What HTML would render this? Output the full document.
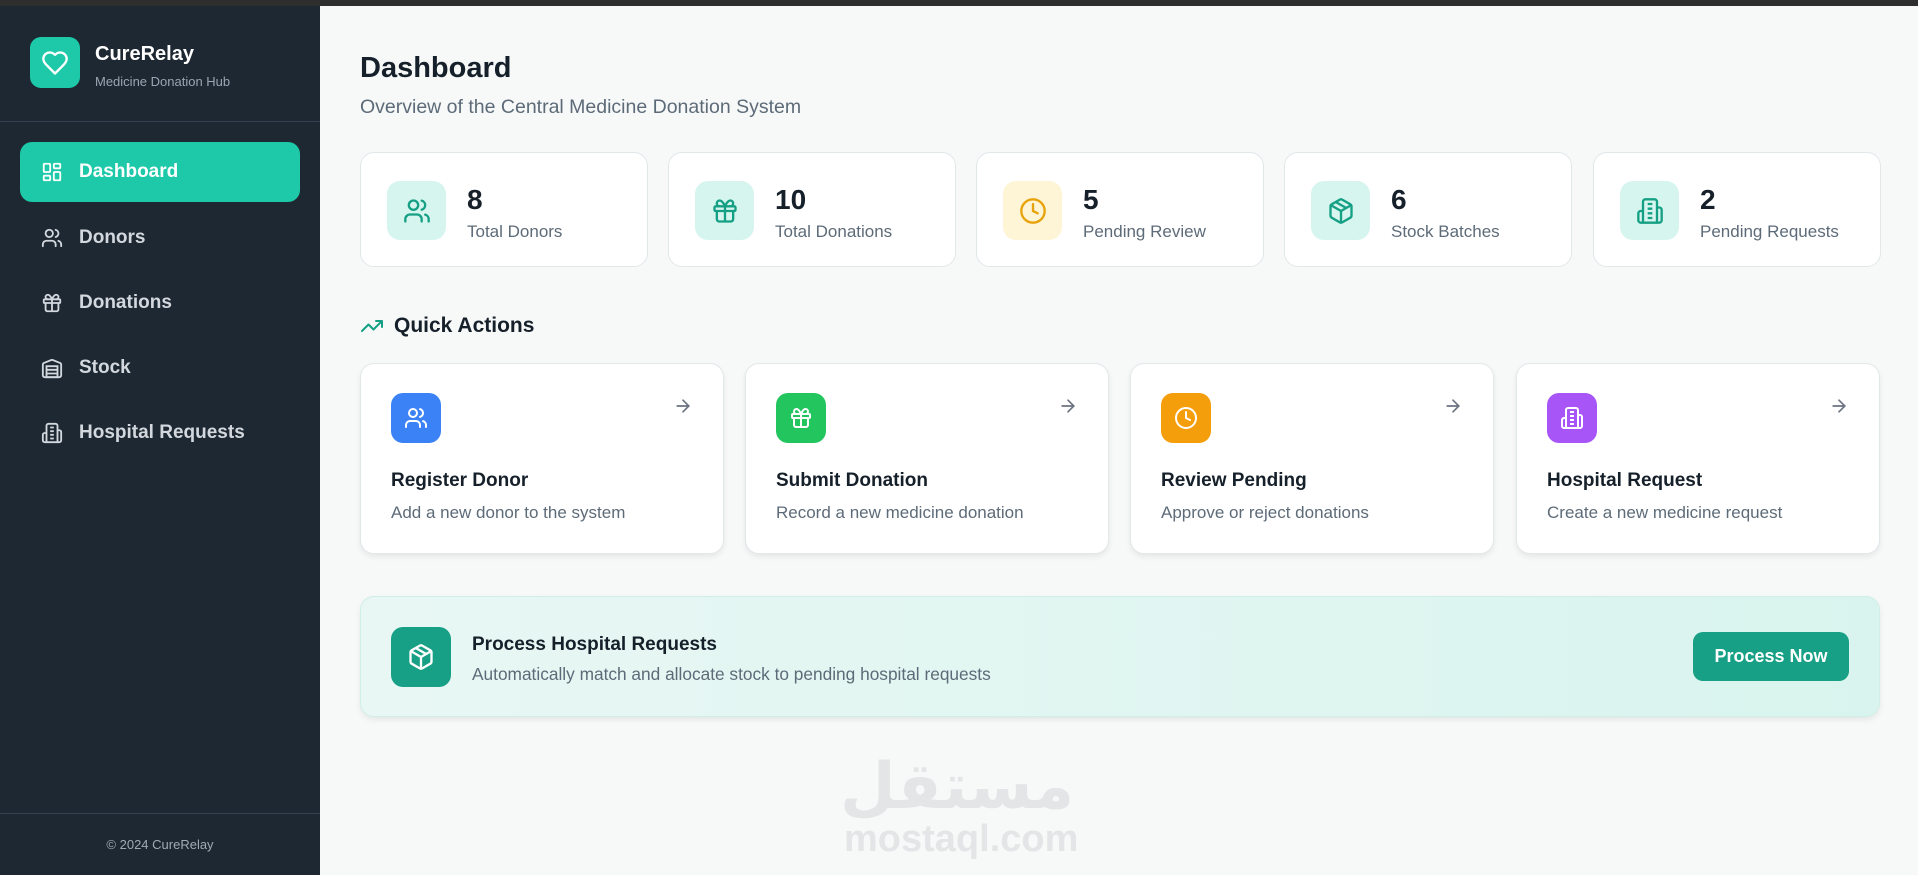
<!DOCTYPE html>
<html><head><meta charset="utf-8">
<style>
*{box-sizing:border-box;margin:0;padding:0}
body{width:1918px;height:875px;overflow:hidden;font-family:"Liberation Sans","DejaVu Sans",sans-serif;background:#f7f9f9;position:relative}
.top{position:absolute;left:0;top:0;width:1918px;height:6px;background:#2e2e2e}
.side{position:absolute;left:0;top:6px;width:320px;height:869px;background:#1e2832;color:#d8dde2}
.logo{position:absolute;left:30px;top:31px;width:50px;height:51px;border-radius:11px;background:#1dc9a8;display:flex;align-items:center;justify-content:center}
.brand{position:absolute;left:95px;top:37px;font-size:20px;font-weight:bold;color:#fff}
.bsub{position:absolute;left:95px;top:68px;font-size:13px;color:#9aa5b1}
.div1{position:absolute;left:0;top:115px;width:320px;height:1px;background:#344150}
.nav{position:absolute;left:20px;width:280px;height:60px;border-radius:12px;display:flex;align-items:center;padding-left:21px;font-size:19px;font-weight:bold;color:#d3d8de}
.nav svg{margin-right:16px}
.nav.act{background:#1dc9a8;color:#fff}
.div2{position:absolute;left:0;top:807px;width:320px;height:1px;background:#344150}
.foot{position:absolute;left:0;top:831px;width:320px;text-align:center;font-size:13px;color:#a0aab4}
h1{position:absolute;left:360px;top:52px;font-size:29px;color:#16202a}
.sub{position:absolute;left:360px;top:96px;font-size:19.5px;color:#5d6b78;white-space:nowrap}
.stat{position:absolute;top:152px;width:288px;height:115px;background:#fff;border:1px solid #e2e7ea;border-radius:14px}
.si{position:absolute;left:26px;top:28px;width:59px;height:59px;border-radius:13px;background:#d6f5ee;display:flex;align-items:center;justify-content:center}
.sn{position:absolute;left:106px;top:31px;font-size:28px;font-weight:bold;color:#16202a}
.sl{position:absolute;left:106px;top:69px;font-size:17px;color:#5d6b78;white-space:nowrap}
.qa{position:absolute;left:360px;top:314px;font-size:21px;font-weight:bold;color:#16202a;display:flex;align-items:center}
.qa svg{margin-right:10px}
.card{position:absolute;top:363px;width:364px;height:191px;background:#fff;border:1px solid #e2e7ea;border-radius:14px;box-shadow:0 3px 6px rgba(0,0,0,.07)}
.ci{position:absolute;left:30px;top:29px;width:50px;height:50px;border-radius:12px;display:flex;align-items:center;justify-content:center}
.arr{position:absolute;right:30px;top:32px}
.ct{position:absolute;left:30px;top:106px;font-size:19px;font-weight:bold;color:#16202a}
.cd{position:absolute;left:30px;top:139px;font-size:17px;color:#5d6b78;white-space:nowrap}
.ban{position:absolute;left:360px;top:596px;width:1520px;height:121px;border-radius:14px;border:1px solid #cfeee6;background:linear-gradient(90deg,#e8f7f4,#d9f4ee);box-shadow:0 3px 6px rgba(0,0,0,.07)}
.bi{position:absolute;left:30px;top:30px;width:60px;height:60px;border-radius:12px;background:#17a085;display:flex;align-items:center;justify-content:center}
.bt{position:absolute;left:111px;top:37px;font-size:19px;font-weight:bold;color:#16202a}
.bd{position:absolute;left:111px;top:67px;font-size:17.3px;color:#5d6b78;white-space:nowrap}
.btn{position:absolute;left:1332px;top:35px;width:156px;height:49px;border-radius:10px;background:#17a085;color:#fff;font-size:18px;font-weight:bold;display:flex;align-items:center;justify-content:center}
.wm1{position:absolute;left:840px;top:750px;font-size:64px;font-weight:bold;color:#e3e5e6;font-family:"DejaVu Sans",sans-serif}
.wm2{position:absolute;left:844px;top:818px;font-size:38px;font-weight:bold;color:#e3e5e6}
</style></head><body>
<div class="top"></div>
<div class="side">
<div class="logo"><svg width="28" height="28" viewBox="0 0 24 24" fill="none" stroke="#fff" stroke-width="2" stroke-linecap="round" stroke-linejoin="round"><path d="M19 14c1.49-1.46 3-3.21 3-5.5A5.5 5.5 0 0 0 16.5 3c-1.76 0-3 .5-4.5 2-1.5-1.5-2.74-2-4.5-2A5.5 5.5 0 0 0 2 8.5c0 2.3 1.5 4.05 3 5.5l7 7Z"/></svg></div>
<div class="brand">CureRelay</div>
<div class="bsub">Medicine Donation Hub</div>
<div class="div1"></div>
<div class="nav act" style="top:136px"><svg width="22" height="22" viewBox="0 0 24 24" fill="none" stroke="#fff" stroke-width="2"><rect x="3" y="3" width="7" height="9" rx="1"/><rect x="14" y="3" width="7" height="5" rx="1"/><rect x="14" y="12" width="7" height="9" rx="1"/><rect x="3" y="16" width="7" height="5" rx="1"/></svg>Dashboard</div>
<div class="nav" style="top:202px"><svg width="22" height="22" viewBox="0 0 24 24" fill="none" stroke="#d3d8de" stroke-width="2" stroke-linecap="round"><path d="M16 21v-2a4 4 0 0 0-4-4H6a4 4 0 0 0-4 4v2"/><circle cx="9" cy="7" r="4"/><path d="M22 21v-2a4 4 0 0 0-3-3.87M16 3.13a4 4 0 0 1 0 7.75"/></svg>Donors</div>
<div class="nav" style="top:267px"><svg width="22" height="22" viewBox="0 0 24 24" fill="none" stroke="#d3d8de" stroke-width="2" stroke-linecap="round"><rect x="3" y="8" width="18" height="4" rx="1"/><path d="M12 8v13M19 12v7a2 2 0 0 1-2 2H7a2 2 0 0 1-2-2v-7M7.5 8a2.5 2.5 0 0 1 0-5C10 3 12 8 12 8s2-5 4.5-5a2.5 2.5 0 0 1 0 5"/></svg>Donations</div>
<div class="nav" style="top:332px"><svg width="22" height="22" viewBox="0 0 24 24" fill="none" stroke="#d3d8de" stroke-width="2"><path d="M22 8.35V20a2 2 0 0 1-2 2H4a2 2 0 0 1-2-2V8.35A2 2 0 0 1 3.26 6.5l8-3.2a2 2 0 0 1 1.48 0l8 3.2A2 2 0 0 1 22 8.35Z"/><path d="M6 18h12M6 14h12M6 10h12v12H6z"/></svg>Stock</div>
<div class="nav" style="top:397px"><svg width="22" height="22" viewBox="0 0 24 24" fill="none" stroke="#d3d8de" stroke-width="2"><path d="M6 22V4a2 2 0 0 1 2-2h8a2 2 0 0 1 2 2v18Z M6 12H4a2 2 0 0 0-2 2v6a2 2 0 0 0 2 2h2 M18 9h2a2 2 0 0 1 2 2v9a2 2 0 0 1-2 2h-2 M10 6h4 M10 10h4 M10 14h4 M10 18h4"/></svg>Hospital Requests</div>
<div class="div2"></div>
<div class="foot">© 2024 CureRelay</div>
</div>

<h1>Dashboard</h1>
<div class="sub">Overview of the Central Medicine Donation System</div>

<div class="stat" style="left:360px"><div class="si"><svg width="28" height="28" viewBox="0 0 24 24" fill="none" stroke="#15a085" stroke-width="2" stroke-linecap="round"><path d="M16 21v-2a4 4 0 0 0-4-4H6a4 4 0 0 0-4 4v2"/><circle cx="9" cy="7" r="4"/><path d="M22 21v-2a4 4 0 0 0-3-3.87M16 3.13a4 4 0 0 1 0 7.75"/></svg></div><div class="sn">8</div><div class="sl">Total Donors</div></div>
<div class="stat" style="left:668px"><div class="si"><svg width="28" height="28" viewBox="0 0 24 24" fill="none" stroke="#15a085" stroke-width="2" stroke-linecap="round"><rect x="3" y="8" width="18" height="4" rx="1"/><path d="M12 8v13M19 12v7a2 2 0 0 1-2 2H7a2 2 0 0 1-2-2v-7M7.5 8a2.5 2.5 0 0 1 0-5C10 3 12 8 12 8s2-5 4.5-5a2.5 2.5 0 0 1 0 5"/></svg></div><div class="sn">10</div><div class="sl">Total Donations</div></div>
<div class="stat" style="left:976px"><div class="si" style="background:#fef5d6"><svg width="28" height="28" viewBox="0 0 24 24" fill="none" stroke="#e8a30c" stroke-width="2" stroke-linecap="round"><circle cx="12" cy="12" r="10"/><path d="M12 6v6l4 2"/></svg></div><div class="sn">5</div><div class="sl">Pending Review</div></div>
<div class="stat" style="left:1284px"><div class="si"><svg width="28" height="28" viewBox="0 0 24 24" fill="none" stroke="#15a085" stroke-width="2" stroke-linejoin="round"><path d="M21 8a2 2 0 0 0-1-1.73l-7-4a2 2 0 0 0-2 0l-7 4A2 2 0 0 0 3 8v8a2 2 0 0 0 1 1.73l7 4a2 2 0 0 0 2 0l7-4A2 2 0 0 0 21 16Z"/><path d="M3.3 7 12 12l8.7-5M12 22V12M7.5 4.27l9 5.15"/></svg></div><div class="sn">6</div><div class="sl">Stock Batches</div></div>
<div class="stat" style="left:1593px"><div class="si"><svg width="28" height="28" viewBox="0 0 24 24" fill="none" stroke="#15a085" stroke-width="2"><path d="M6 22V4a2 2 0 0 1 2-2h8a2 2 0 0 1 2 2v18Z M6 12H4a2 2 0 0 0-2 2v6a2 2 0 0 0 2 2h2 M18 9h2a2 2 0 0 1 2 2v9a2 2 0 0 1-2 2h-2 M10 6h4 M10 10h4 M10 14h4 M10 18h4"/></svg></div><div class="sn">2</div><div class="sl">Pending Requests</div></div>

<div class="qa"><svg width="24" height="24" viewBox="0 0 24 24" fill="none" stroke="#15a085" stroke-width="2" stroke-linecap="round" stroke-linejoin="round"><path d="M22 7l-8.5 8.5-5-5L2 17M16 7h6v6"/></svg>Quick Actions</div>

<div class="card" style="left:360px"><div class="ci" style="background:#3b82f6"><svg width="24" height="24" viewBox="0 0 24 24" fill="none" stroke="#fff" stroke-width="2" stroke-linecap="round"><path d="M16 21v-2a4 4 0 0 0-4-4H6a4 4 0 0 0-4 4v2"/><circle cx="9" cy="7" r="4"/><path d="M22 21v-2a4 4 0 0 0-3-3.87M16 3.13a4 4 0 0 1 0 7.75"/></svg></div><svg class="arr" width="20" height="20" viewBox="0 0 24 24" fill="none" stroke="#6b7280" stroke-width="2" stroke-linecap="round"><path d="M5 12h14M12 5l7 7-7 7"/></svg><div class="ct">Register Donor</div><div class="cd">Add a new donor to the system</div></div>
<div class="card" style="left:745px"><div class="ci" style="background:#22c55e"><svg width="24" height="24" viewBox="0 0 24 24" fill="none" stroke="#fff" stroke-width="2" stroke-linecap="round"><rect x="3" y="8" width="18" height="4" rx="1"/><path d="M12 8v13M19 12v7a2 2 0 0 1-2 2H7a2 2 0 0 1-2-2v-7M7.5 8a2.5 2.5 0 0 1 0-5C10 3 12 8 12 8s2-5 4.5-5a2.5 2.5 0 0 1 0 5"/></svg></div><svg class="arr" width="20" height="20" viewBox="0 0 24 24" fill="none" stroke="#6b7280" stroke-width="2" stroke-linecap="round"><path d="M5 12h14M12 5l7 7-7 7"/></svg><div class="ct">Submit Donation</div><div class="cd">Record a new medicine donation</div></div>
<div class="card" style="left:1130px"><div class="ci" style="background:#f59e0b"><svg width="24" height="24" viewBox="0 0 24 24" fill="none" stroke="#fff" stroke-width="2" stroke-linecap="round"><circle cx="12" cy="12" r="10"/><path d="M12 6v6l4 2"/></svg></div><svg class="arr" width="20" height="20" viewBox="0 0 24 24" fill="none" stroke="#6b7280" stroke-width="2" stroke-linecap="round"><path d="M5 12h14M12 5l7 7-7 7"/></svg><div class="ct">Review Pending</div><div class="cd">Approve or reject donations</div></div>
<div class="card" style="left:1516px"><div class="ci" style="background:#a855f7"><svg width="24" height="24" viewBox="0 0 24 24" fill="none" stroke="#fff" stroke-width="2"><path d="M6 22V4a2 2 0 0 1 2-2h8a2 2 0 0 1 2 2v18Z M6 12H4a2 2 0 0 0-2 2v6a2 2 0 0 0 2 2h2 M18 9h2a2 2 0 0 1 2 2v9a2 2 0 0 1-2 2h-2 M10 6h4 M10 10h4 M10 14h4 M10 18h4"/></svg></div><svg class="arr" width="20" height="20" viewBox="0 0 24 24" fill="none" stroke="#6b7280" stroke-width="2" stroke-linecap="round"><path d="M5 12h14M12 5l7 7-7 7"/></svg><div class="ct">Hospital Request</div><div class="cd">Create a new medicine request</div></div>

<div class="ban"><div class="bi"><svg width="28" height="28" viewBox="0 0 24 24" fill="none" stroke="#fff" stroke-width="2" stroke-linejoin="round"><path d="M21 8a2 2 0 0 0-1-1.73l-7-4a2 2 0 0 0-2 0l-7 4A2 2 0 0 0 3 8v8a2 2 0 0 0 1 1.73l7 4a2 2 0 0 0 2 0l7-4A2 2 0 0 0 21 16Z"/><path d="M3.3 7 12 12l8.7-5M12 22V12M7.5 4.27l9 5.15"/></svg></div><div class="bt">Process Hospital Requests</div><div class="bd">Automatically match and allocate stock to pending hospital requests</div><div class="btn">Process Now</div></div>

<div class="wm1">مستقل</div>
<div class="wm2">mostaql.com</div>
</body></html>
